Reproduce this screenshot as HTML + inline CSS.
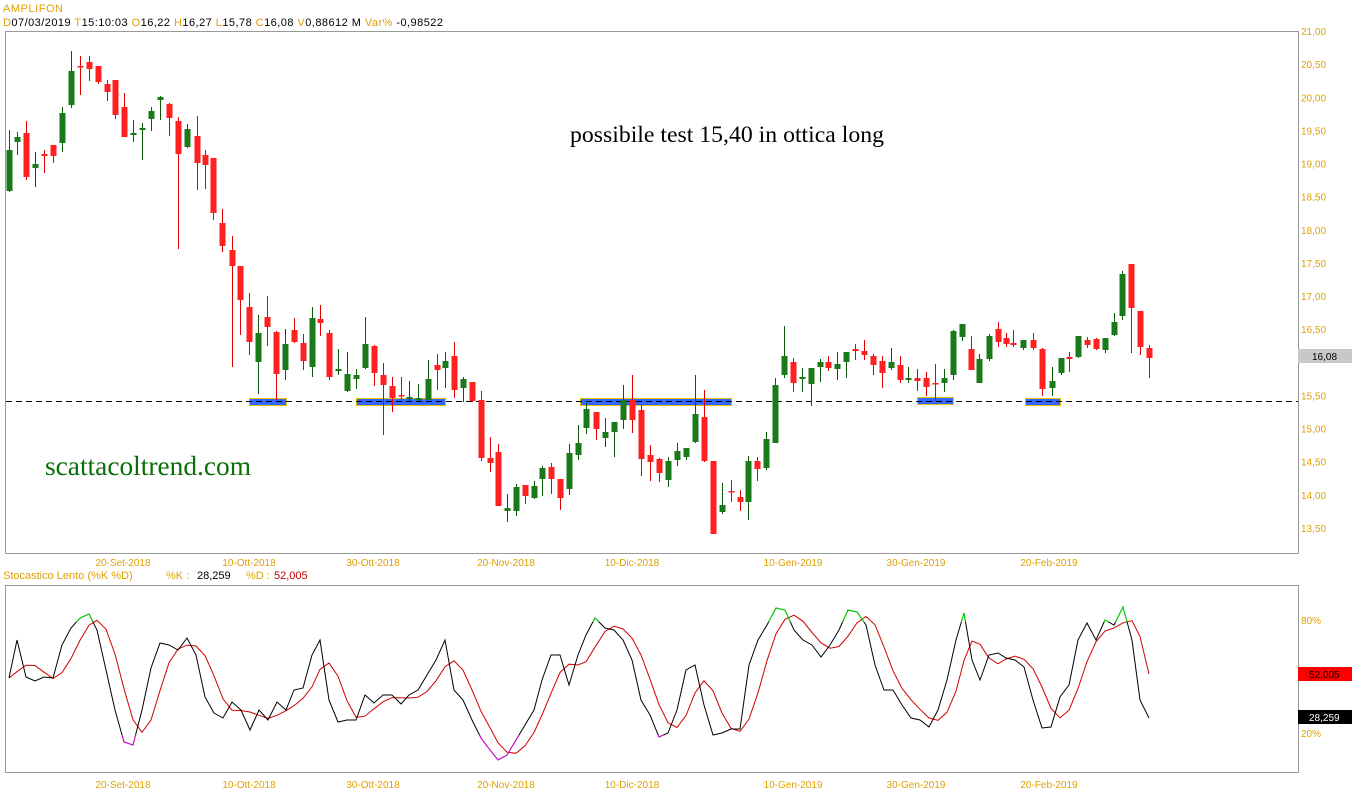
<!DOCTYPE html>
<html><head><meta charset="utf-8"><style>
html,body{margin:0;padding:0;background:#fff;width:1352px;height:800px;overflow:hidden}
svg{display:block}
</style></head><body>
<svg id="s" width="1352" height="800" xmlns="http://www.w3.org/2000/svg" font-family="Liberation Sans, sans-serif">
<defs>
<clipPath id="cg"><rect x="0" y="0" width="1300" height="622"/></clipPath>
<clipPath id="cm"><rect x="0" y="735" width="1300" height="60"/></clipPath>
</defs>
<rect width="1352" height="800" fill="#fff"/>
<text x="3" y="12" font-size="11" fill="#e0a000" textLength="60" lengthAdjust="spacing">AMPLIFON</text>
<text x="3" y="26" font-size="11" fill="#000" textLength="440" lengthAdjust="spacing"><tspan fill="#e0a000">D</tspan>07/03/2019 <tspan fill="#e0a000">T</tspan>15:10:03 <tspan fill="#e0a000"> O</tspan>16,22 <tspan fill="#e0a000"> H</tspan>16,27 <tspan fill="#e0a000"> L</tspan>15,78 <tspan fill="#e0a000"> C</tspan>16,08 <tspan fill="#e0a000"> V</tspan>0,88612 M <tspan fill="#e0a000">  Var%</tspan> -0,98522</text>
<rect x="5.5" y="31.5" width="1293" height="522" fill="none" stroke="#999"/>
<rect x="5.5" y="585.5" width="1293" height="187" fill="none" stroke="#999"/>
<g id="sup" fill="#3366ff" stroke="#e8c000" stroke-width="1">
<rect x="249.5" y="398.5" width="37" height="7"/>
<rect x="356.5" y="398.5" width="89" height="7"/>
<rect x="580.5" y="398.5" width="151" height="7"/>
<rect x="917.5" y="397.5" width="36" height="7"/>
<rect x="1025.5" y="398.5" width="35" height="7"/>
</g>
<line x1="6" y1="401.5" x2="1298" y2="401.5" stroke="#000" stroke-dasharray="6,4"/>
<g id="c"></g>
<g id="st"></g>
<text x="570" y="142" font-family="Liberation Serif, serif" font-size="23.5" fill="#000" textLength="314" lengthAdjust="spacingAndGlyphs">possibile test 15,40 in ottica long</text>
<text x="45" y="475" font-family="Liberation Serif, serif" font-size="27" fill="#0a6e0a" textLength="206" lengthAdjust="spacingAndGlyphs">scattacoltrend.com</text>
<g id="ax" font-size="10" fill="#e0a000"></g>
<rect x="1298" y="349" width="54" height="14" fill="#c8c8c8"/>
<text x="1312" y="360" font-size="10" fill="#000">16,08</text>
<rect x="1298" y="667" width="54" height="14" fill="#ff0000"/>
<text x="1309" y="678" font-size="10" fill="#000">52,005</text>
<rect x="1298" y="710" width="54" height="14" fill="#000"/>
<text x="1309" y="721" font-size="10" fill="#fff">28,259</text>
<text x="3" y="579" font-size="11" fill="#e0a000">Stocastico Lento (%K %D)</text>
<text x="166" y="579" font-size="11" fill="#e0a000">%K :</text>
<text x="197" y="579" font-size="11" fill="#000">28,259</text>
<text x="246" y="579" font-size="11" fill="#e0a000">%D :</text>
<text x="274" y="579" font-size="11" fill="#c00000">52,005</text>
</svg>
<script>
var NS="http://www.w3.org/2000/svg";
function el(p,t,a,txt){var e=document.createElementNS(NS,t);for(var k in a)e.setAttribute(k,a[k]);if(txt!=null)e.textContent=txt;p.appendChild(e);return e;}
var C=[
[9,'g',150,191,130,192],[17,'g',137,142,132,155],[26,'r',133,177,121,180],[35,'g',164,168,152,187],[44,'r',154,156,150,173],[53,'r',145,156,145,163],[62,'g',113,143,107,152],[71,'g',71,105,51,108],[80,'r',66,67,56,95],[89,'r',62,69,56,81],[98,'r',66,82,66,84],[107,'r',84,92,80,101],[115,'r',80,115,80,119],[124,'r',107,137,93,137],[133,'g',133,135,120,142],[142,'g',128,130,123,160],[151,'g',111,119,107,131],[160,'g',97,100,96,120],[169,'r',104,118,103,136],[178,'r',121,154,117,249],[187,'g',129,147,124,148],[197,'r',136,163,116,190],[205,'r',155,165,150,189],[213,'r',158,213,158,220],[222,'r',223,246,209,252],
[232,'r',250,266,236,367],[240,'r',266,300,266,335],[249,'r',307,342,293,355],[258,'g',333,362,315,394],[267,'r',317,327,296,346],[276,'r',332,374,331,400],[285,'g',344,370,329,380],[294,'r',330,342,318,343],[303,'r',343,361,334,370],[312,'g',318,367,307,377],[320,'r',319,323,305,336],[329,'r',333,377,330,380],[338,'g',369,371,349,375],[347,'g',374,391,352,392],[356,'g',375,379,369,389],[365,'g',344,368,317,369],[374,'r',346,373,345,386],[383,'r',375,385,363,435],[392,'r',386,398,377,412],[401,'r',395,396,377,400],[409,'g',397,399,381,402],[418,'g',398,400,384,401],[428,'g',379,400,360,400],[437,'r',365,370,354,390],[445,'g',361,368,352,388],[454,'r',356,390,342,398],[463,'g',379,388,377,402],[472,'r',382,401,382,402],
[481,'r',400,458,391,461],[490,'r',458,463,437,472],[498,'r',452,506,444,506],[507,'g',508,511,494,522],[516,'g',487,511,484,516],[525,'r',485,496,485,504],[534,'g',486,498,481,499],[542,'g',468,479,466,496],[551,'r',467,479,463,494],[560,'r',479,498,479,510],[569,'g',453,489,444,495],[578,'g',443,455,425,460],[586,'g',409,428,403,434],[596,'r',412,429,412,440],[605,'g',432,438,418,447],[614,'g',422,432,422,457],[623,'g',400,420,385,429],[632,'r',400,420,375,433],[641,'r',410,459,405,476],[650,'r',455,462,445,481],[659,'r',459,473,458,482],[668,'g',461,480,457,487],[677,'g',451,460,443,466],[686,'g',448,457,448,460],[695,'g',414,442,375,443],[704,'r',417,461,390,462],[713,'r',461,534,461,534],[722,'g',505,512,483,514],[731,'r',491,492,480,502],[740,'r',497,502,490,511],[748,'g',461,502,456,520],[757,'r',461,469,457,481],[766,'g',439,468,432,470],
[775,'g',385,443,378,443],[784,'g',356,375,326,378],[793,'r',362,383,358,392],[802,'g',377,379,368,392],[811,'g',368,384,368,406],[820,'g',362,367,359,382],[828,'r',362,368,356,371],[837,'g',364,369,352,380],[846,'g',352,362,352,378],[855,'r',349,351,344,360],[864,'r',351,355,340,360],[873,'r',356,365,354,375],[882,'r',361,373,356,388],[891,'g',362,368,348,370],[900,'r',365,380,356,383],[908,'g',378,380,367,383],[917,'r',378,381,369,391],[926,'r',378,387,372,396],[935,'r',383,384,364,401],[944,'g',378,383,369,392],[953,'g',331,375,330,380],[962,'g',324,337,324,341],[971,'r',349,370,336,370],[979,'g',359,383,354,383],[989,'g',336,359,334,361],[998,'r',329,342,322,347],[1006,'r',338,344,333,347],[1013,'r',343,345,330,347],[1023,'g',340,348,340,350],[1033,'r',340,348,333,350],[1042,'r',349,389,348,396],[1052,'g',381,388,367,396],[1061,'g',358,373,358,375],[1069,'r',357,359,352,372],[1078,'g',336,357,336,358],[1087,'r',340,345,337,348],[1096,'r',339,349,338,350],[1105,'g',338,350,338,353],[1114,'g',322,335,313,336],[1122,'g',274,316,271,320],[1131,'r',264,308,264,353],[1140,'r',311,347,311,355],[1149,'r',348,358,345,378]];
var g=document.getElementById('c');
C.forEach(function(c){var col=c[1]=='g'?'#1a7a1a':'#ff2020',wc=c[1]=='g'?'#0a5a0a':'#e00000';
el(g,'line',{x1:c[0]+.5,x2:c[0]+.5,y1:c[4],y2:c[5],stroke:wc,'stroke-width':1});
el(g,'rect',{x:c[0]-2.5,y:c[2],width:6,height:Math.max(1.5,c[3]-c[2]),fill:col});});
var K=[[9,678],[17,640],[26,677],[35,681],[44,677],[53,678],[62,645],[71,628],[80,618],[89,614],[97,630],[106,670],[115,710],[124,742],[133,745],[142,710],[151,668],[160,643],[169,645],[178,650],[187,638],[196,655],[205,697],[214,713],[223,718],[232,702],[241,710],[250,730],[259,710],[268,720],[277,702],[286,710],[294,690],[303,688],[312,655],[320,640],[329,700],[338,722],[347,720],[356,720],[365,695],[374,703],[383,695],[392,695],[401,704],[409,695],[418,690],[427,675],[436,660],[445,640],[454,690],[463,700],[472,720],[481,738],[490,750],[498,760],[507,755],[516,740],[525,725],[534,710],[542,680],[551,655],[560,655],[569,685],[578,655],[586,635],[595,618],[605,628],[614,630],[623,640],[632,660],[641,700],[650,715],[659,737],[668,733],[677,710],[686,670],[695,665],[704,705],[713,735],[722,733],[731,729],[740,729],[749,665],[758,640],[767,625],[776,608],[785,610],[794,630],[803,640],[812,645],[821,657],[830,645],[839,630],[848,610],[857,612],[866,625],[875,665],[884,690],[893,690],[902,705],[911,718],[920,720],[929,727],[938,710],[947,680],[956,640],[964,613],[972,660],[980,680],[989,655],[998,653],[1006,658],[1015,660],[1024,667],[1033,700],[1042,728],[1051,727],[1060,697],[1069,685],[1078,640],[1087,623],[1096,640],[1105,620],[1114,625],[1123,607],[1132,640],[1140,700],[1149,718]];
var st=document.getElementById('st');
var kp=K.map(function(p){return p[0]+','+p[1]}).join(' ');
var D=K.map(function(p,i){var a=K[Math.max(0,i-2)][1],b=K[Math.max(0,i-1)][1];return [p[0],(a+b+p[1])/3];});
var D2=D.map(function(p,i){var a=D[Math.max(0,i-1)][1],b=D[i][1];return [p[0],(a+b)/2];});
D2[D2.length-1][1]=674;
el(st,'polyline',{points:D2.map(function(p){return p[0]+','+p[1].toFixed(1)}).join(' '),fill:'none',stroke:'#d00000','stroke-width':1});
el(st,'polyline',{points:kp,fill:'none',stroke:'#000','stroke-width':1});
el(st,'polyline',{points:kp,fill:'none',stroke:'#00e000','stroke-width':1,'clip-path':'url(#cg)'});
el(st,'polyline',{points:kp,fill:'none',stroke:'#e000e0','stroke-width':1,'clip-path':'url(#cm)'});
var ax=document.getElementById('ax');
for(var i=0;i<=15;i++){var p=21-i*0.5,y=31+i*33.13;if(p==16)continue;
el(ax,'text',{x:1301,y:y+4},p.toFixed(2).replace('.',','));}
el(ax,'text',{x:1301,y:624},'80%');el(ax,'text',{x:1301,y:737},'20%');
var dates=[[123,'20-Set-2018'],[249,'10-Ott-2018'],[373,'30-Ott-2018'],[506,'20-Nov-2018'],[632,'10-Dic-2018'],[793,'10-Gen-2019'],[916,'30-Gen-2019'],[1049,'20-Feb-2019']];
dates.forEach(function(d){el(ax,'text',{x:d[0],y:566,'text-anchor':'middle'},d[1]);el(ax,'text',{x:d[0],y:788,'text-anchor':'middle'},d[1]);});
</script>
</body></html>
